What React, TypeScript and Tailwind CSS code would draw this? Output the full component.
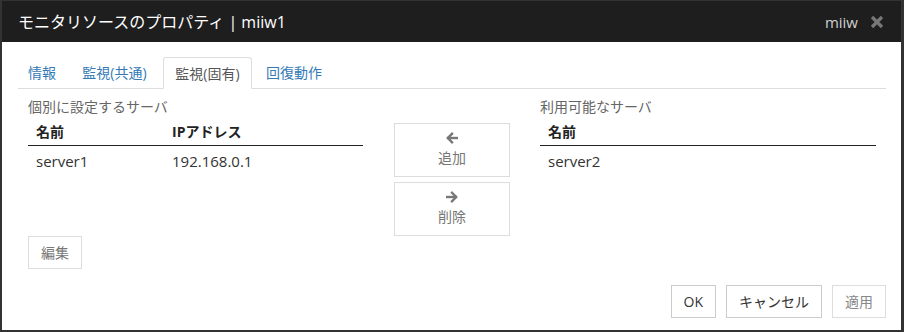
import React from "react";

const font = { fontFamily: '"Open Sans", "Noto Sans CJK JP", sans-serif' };

function Arrow({ dir }: { dir: "left" | "right" }) {
  return (
    <svg width="12" height="12" viewBox="0 0 12 12" fill="none" stroke="#777" strokeWidth="2.4" strokeLinecap="square" strokeLinejoin="miter">
      {dir === "left" ? (
        <>
          <path d="M6 1.8 L1.8 6 L6 10.2" />
          <path d="M2.2 6 H10.8" />
        </>
      ) : (
        <>
          <path d="M6 1.8 L10.2 6 L6 10.2" />
          <path d="M1.2 6 H9.8" />
        </>
      )}
    </svg>
  );
}

export default function App() {
  const tabs = [
    { label: "情報", w: "w-[48px]", active: false },
    { label: "監視(共通)", w: "w-[93px]", active: false },
    { label: "監視(固有)", w: "w-[89px]", active: true },
    { label: "回復動作", w: "w-[80px]", active: false },
  ];
  return (
    <div
      className="w-[904px] h-[332px] flex flex-col bg-[#1e1e1e] border-l-2 border-r-[3px] border-b-2 border-t border-[#333]"
      style={font}
    >
      <div className="h-[41px] shrink-0 flex items-center justify-between pl-[16px] pr-[17px] bg-[#1e1e1e]">
        <div className="text-[16px] leading-[20px] text-white">モニタリソースのプロパティ | miiw1</div>
        <div className="flex items-center gap-[12px]">
          <span className="text-[15px] leading-[20px] text-[#d0d0d0]">miiw</span>
          <svg width="14" height="14" viewBox="0 0 14 14" stroke="#777" strokeWidth="3.2" strokeLinecap="butt">
            <path d="M2 2 L12 12 M12 2 L2 12" />
          </svg>
        </div>
      </div>
      <div className="flex-1 bg-white flex flex-col pl-[16px] pr-[15px]">
        <div className="mt-[15px] flex gap-[2px] border-b border-[#ddd] h-[32px]">
          {tabs.map((t) => (
            <div
              key={t.label}
              className={
                t.active
                  ? `${t.w} h-[32px] flex items-center justify-center text-[14px] text-[#555] bg-white border border-[#ddd] border-b-white rounded-t-[3px]`
                  : `${t.w} h-[31px] flex items-center justify-center text-[14px] text-[#337ab7]`
              }
            >
              {t.label}
            </div>
          ))}
        </div>
        <div className="px-[10px]">
          <div className="flex">
            <div className="w-[335px] shrink-0">
              <div className="pt-[8px] text-[14px] leading-[20px] text-[#666]">個別に設定するサーバ</div>
              <div className="grid grid-cols-[136px_1fr] border-b border-[#222] pt-[5px] pb-[3px] text-[14px] leading-[20px] font-bold text-[#222]">
                <div className="pl-[8px]">名前</div>
                <div className="pl-[8px]">IPアドレス</div>
              </div>
              <div className="grid grid-cols-[136px_1fr] pt-[5px] text-[15px] leading-[20px] text-[#333]">
                <div className="pl-[8px]">server1</div>
                <div className="pl-[8px]">192.168.0.1</div>
              </div>
            </div>
            <div className="ml-[31px] w-[116px] shrink-0 pt-[34px] flex flex-col gap-[5px]">
              <div className="h-[54px] border border-[#ddd] flex flex-col items-center justify-center gap-[4px] text-[14px] leading-[20px] text-[#777]">
                <Arrow dir="left" />
                <span>追加</span>
              </div>
              <div className="h-[54px] border border-[#ddd] flex flex-col items-center justify-center gap-[4px] text-[14px] leading-[20px] text-[#777]">
                <Arrow dir="right" />
                <span>削除</span>
              </div>
            </div>
            <div className="ml-[30px] flex-1">
              <div className="pt-[8px] text-[14px] leading-[20px] text-[#666]">利用可能なサーバ</div>
              <div className="border-b border-[#222] pt-[5px] pb-[3px] text-[14px] leading-[20px] font-bold text-[#222]">
                <div className="pl-[8px]">名前</div>
              </div>
              <div className="pt-[5px] text-[15px] leading-[20px] text-[#333]">
                <div className="pl-[8px]">server2</div>
              </div>
            </div>
          </div>
          <div className="flex">
            <div className="h-[33px] w-[54px] border border-[#ddd] flex items-center justify-center text-[14px] text-[#777]">編集</div>
          </div>
        </div>
        <div className="mt-[16px] flex justify-end gap-[10px]">
          <div className="h-[33px] px-[12px] border border-[#ccc] flex items-center justify-center text-[14px] text-[#333]">OK</div>
          <div className="h-[33px] px-[12px] border border-[#ccc] flex items-center justify-center text-[14px] text-[#333]">キャンセル</div>
          <div className="h-[33px] px-[12px] border border-[#ddd] flex items-center justify-center text-[14px] text-[#888]">適用</div>
        </div>
      </div>
    </div>
  );
}
